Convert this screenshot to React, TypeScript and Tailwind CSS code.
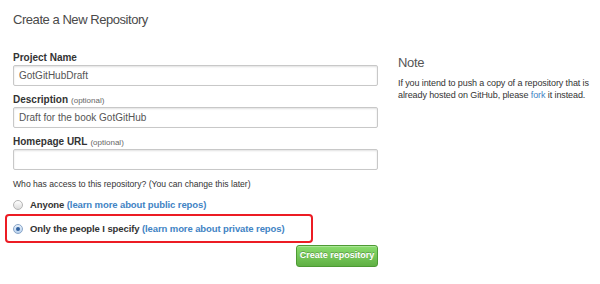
import type { ReactNode } from 'react'

const font = { fontFamily: '"Liberation Sans", Arial, Helvetica, sans-serif' }

function Field({ label, optional, value }: { label: string; optional?: boolean; value?: string }) {
  return (
    <div className="flex flex-col">
      <label className="h-[14px] text-[10px] font-bold leading-[14px] text-[#333]">
        {label}
        {optional && <span className="ml-[3px] text-[8px] font-normal text-[#666]">(optional)</span>}
      </label>
      <div className="flex h-[21px] w-[365px] items-center rounded-[2px] border border-[#c8c8c8] bg-white px-[5px] text-[10px] text-[#555] shadow-[inset_0_1px_2px_rgba(0,0,0,0.12)]">
        {value}
      </div>
    </div>
  )
}

function Radio({ checked }: { checked?: boolean }) {
  return (
    <span
      className={
        checked
          ? 'flex h-[10px] w-[10px] items-center justify-center rounded-full border border-[#8aa6c8] bg-gradient-to-b from-[#e8f1fb] to-[#b9d2ee]'
          : 'flex h-[10px] w-[10px] items-center justify-center rounded-full border border-[#b4b4b4] bg-gradient-to-b from-white to-[#dcdcdc]'
      }
    >
      {checked && <span className="h-[4px] w-[4px] rounded-full bg-[#2f5f9e]" />}
    </span>
  )
}

function Option({ checked, label, link }: { checked?: boolean; label: string; link: ReactNode }) {
  return (
    <div className="flex h-[14px] items-center gap-[7px] text-[9.5px] leading-[14px] tracking-[-0.1px]">
      <Radio checked={checked} />
      <span className="font-bold text-[#333]">
        {label} <span className="text-[#4183c4]">{link}</span>
      </span>
    </div>
  )
}

export default function App() {
  return (
    <div className="h-[284px] w-[600px] bg-white pl-[13px] pt-[12px]" style={font}>
      <h1 className="h-[16px] text-[13px] leading-[16px] tracking-[-0.45px] text-[#4a4a4a]">Create a New Repository</h1>
      <div className="mt-[23px] flex gap-[20px]">
        <div className="flex w-[365px] shrink-0 flex-col">
          <div className="flex flex-col gap-[7px]">
            <Field label="Project Name" value="GotGitHubDraft" />
            <Field label="Description" optional value="Draft for the book GotGitHub" />
            <Field label="Homepage URL" optional />
          </div>
          <p className="mt-[7px] h-[14px] text-[8.6px] leading-[14px] text-[#333]">
            Who has access to this repository? (You can change this later)
          </p>
          <div className="mt-[7px]">
            <Option label="Anyone" link="(learn more about public repos)" />
          </div>
          <div className="ml-[-8px] mt-[2px] flex h-[29px] w-[308px] items-center rounded-[4px] border-[2.5px] border-[#ec1c24] pl-[6px]">
            <Option checked label="Only the people I specify" link="(learn more about private repos)" />
          </div>
          <div className="mt-[2px] flex justify-end">
            <button
              type="button"
              className="h-[22px] w-[82px] rounded-[3px] border border-[#4d9a34] bg-gradient-to-b from-[#8add6d] to-[#60b044] text-[9px] font-bold text-white shadow-[inset_0_1px_0_rgba(255,255,255,0.3)] [text-shadow:0_-1px_0_rgba(0,0,0,0.25)]"
            >
              Create repository
            </button>
          </div>
        </div>
        <div className="w-[200px] shrink-0 pt-[4px]">
          <h2 className="text-[13px] leading-[16px] tracking-[-0.3px] text-[#555]">Note</h2>
          <p className="mt-[6px] text-[9px] leading-[12px] tracking-[-0.1px] text-[#333]">
            If you intend to push a copy of a repository that is already hosted on GitHub, please{' '}
            <span className="text-[#4183c4]">fork</span> it instead.
          </p>
        </div>
      </div>
    </div>
  )
}
